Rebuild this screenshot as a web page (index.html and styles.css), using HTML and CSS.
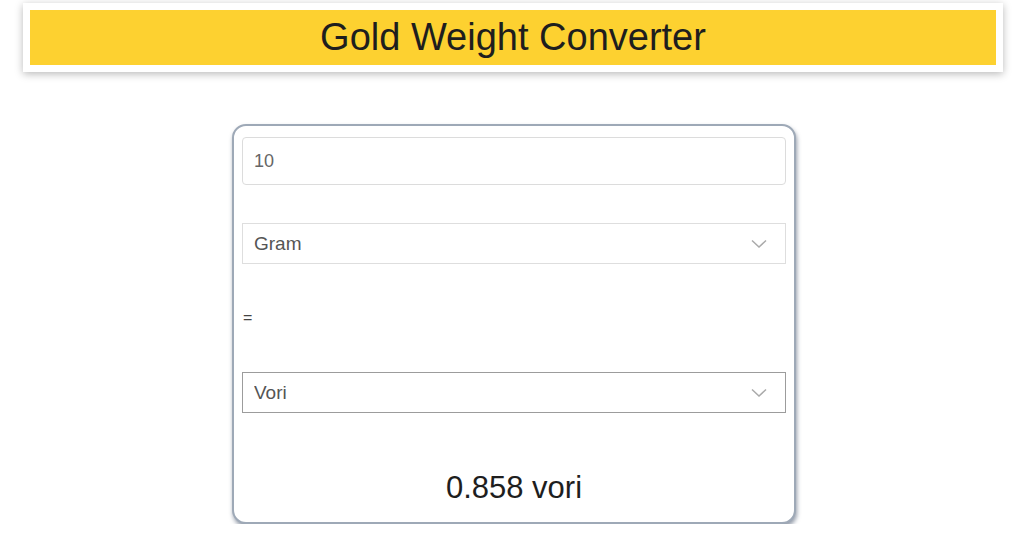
FILE: index.html
```html
<!DOCTYPE html>
<html lang="en">
<head>
    <meta charset="UTF-8">
    <meta name="viewport" content="width=device-width, initial-scale=1.0">
    <title>Gold Weight Converter</title>
    <link rel="stylesheet" href="styles.css">
</head>
<body>
    <div class="header">
        <h1>Gold Weight Converter</h1>
    </div>

    <div class="converter">
        <input type="text" id="amount" class="amount" value="10">

        <div class="select-wrap">
            <select id="fromUnit" class="unit">
                <option>Gram</option>
                <option>Vori</option>
                <option>Ana</option>
                <option>Roti</option>
            </select>
            <svg class="chevron" width="16" height="10" viewBox="0 0 16 10"><path d="M1 1.5 L8 8 L15 1.5" fill="none" stroke="#aaa" stroke-width="1.5"/></svg>
        </div>

        <div class="equals">=</div>

        <div class="select-wrap">
            <select id="toUnit" class="unit unit-active">
                <option>Vori</option>
                <option>Gram</option>
                <option>Ana</option>
                <option>Roti</option>
            </select>
            <svg class="chevron" width="16" height="10" viewBox="0 0 16 10"><path d="M1 1.5 L8 8 L15 1.5" fill="none" stroke="#aaa" stroke-width="1.5"/></svg>
        </div>

        <div class="result">0.858 vori</div>
    </div>
</body>
</html>
```

FILE: styles.css
```css
body {
    margin: 0;
    padding: 3px 0 0 0;
    font-family: "Liberation Sans", Arial, sans-serif;
    background: #ffffff;
}

.header {
    width: 966px;
    margin: 0 0 0 23px;
    padding: 7px;
    background: white;
    box-shadow: 0 2px 8px rgba(0,0,0,0.28);
}

.header h1 {
    margin: 0;
    height: 55px;
    line-height: 55px;
    background: #fdd130;
    color: #1e1e1e;
    text-align: center;
    font-weight: normal;
    font-size: 38px;
}

.converter {
    width: 544px;
    margin: 52px 0 0 232px;
    padding: 11px 8px 0 8px;
    height: 385px;
    border: 2px solid #9ea9b7;
    border-radius: 14px;
    background: white;
    box-shadow: 1px 3px 4px rgba(60,75,100,0.55);
    display: flex;
    flex-direction: column;
}

.amount {
    box-sizing: border-box;
    width: 100%;
    height: 48px;
    margin: 0;
    padding: 0 11px;
    border: 1px solid #dcdcdc;
    border-radius: 4px;
    font-family: inherit;
    font-size: 18px;
    color: #666;
    outline: none;
}

.select-wrap {
    position: relative;
}

.select-wrap:first-of-type {
    margin-top: 38px;
}

.unit {
    box-sizing: border-box;
    width: 100%;
    height: 41px;
    margin: 0;
    padding: 0 11px;
    border: 1px solid #dedede;
    border-radius: 0;
    background: white;
    font-family: inherit;
    font-size: 19px;
    color: #555;
    appearance: none;
    -webkit-appearance: none;
    outline: none;
}

.unit-active {
    border: 1px solid #9c9c9c;
}

.chevron {
    position: absolute;
    right: 19px;
    top: 16px;
}

.equals {
    margin: 45px 0 0 1px;
    height: 63px;
    font-size: 16px;
    color: #444;
}

.result {
    margin-top: 57px;
    text-align: center;
    font-size: 31px;
    color: #1e1e1e;
}
```
